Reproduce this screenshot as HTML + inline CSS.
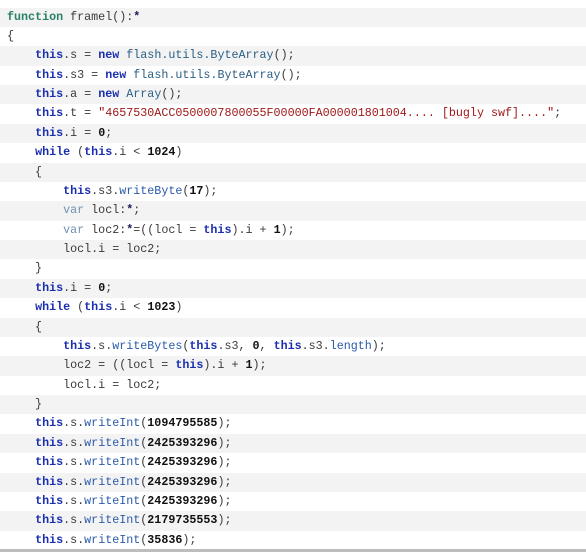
<!DOCTYPE html>
<html><head><meta charset="utf-8"><style>
html,body{margin:0;padding:0;background:#fff;width:586px;height:552px;overflow:hidden}
.wrap{position:absolute;top:7.5px;left:0;width:586px}
.r{height:19.38px;line-height:19.38px;white-space:pre;font-family:"Liberation Mono",monospace;font-size:11.7px;color:#3a3a3a;padding-left:7px;box-sizing:border-box}
.r:nth-child(odd){background:#f3f3f3}
.fn{color:#2a8068;font-weight:bold}
.k{color:#1a2fb0;font-weight:bold}
.v{color:#7090b0}
.c{color:#2a5f85}
.m{color:#2a5aa8}
.s{color:#a01818}
.n{color:#111;font-weight:bold}
.p{color:#1a1a60;font-weight:bold}
.bot{position:absolute;left:0;top:549px;width:586px;height:3px;background:#bdbdbd}
</style></head><body>
<div class="wrap">
<div class="r"><span class="fn">function</span> framel():<span class="p">*</span></div>
<div class="r">{</div>
<div class="r">    <span class="k">this</span>.s = <span class="k">new</span> <span class="c">flash.utils.ByteArray</span>();</div>
<div class="r">    <span class="k">this</span>.s3 = <span class="k">new</span> <span class="c">flash.utils.ByteArray</span>();</div>
<div class="r">    <span class="k">this</span>.a = <span class="k">new</span> <span class="c">Array</span>();</div>
<div class="r">    <span class="k">this</span>.t = <span class="s">"4657530ACC0500007800055F00000FA000001801004.... [bugly swf]...."</span>;</div>
<div class="r">    <span class="k">this</span>.i = <span class="n">0</span>;</div>
<div class="r">    <span class="k">while</span> (<span class="k">this</span>.i &lt; <span class="n">1024</span>)</div>
<div class="r">    {</div>
<div class="r">        <span class="k">this</span>.s3.<span class="m">writeByte</span>(<span class="n">17</span>);</div>
<div class="r">        <span class="v">var</span> locl:<span class="p">*</span>;</div>
<div class="r">        <span class="v">var</span> loc2:<span class="p">*</span>=((locl = <span class="k">this</span>).i + <span class="n">1</span>);</div>
<div class="r">        locl.i = loc2;</div>
<div class="r">    }</div>
<div class="r">    <span class="k">this</span>.i = <span class="n">0</span>;</div>
<div class="r">    <span class="k">while</span> (<span class="k">this</span>.i &lt; <span class="n">1023</span>)</div>
<div class="r">    {</div>
<div class="r">        <span class="k">this</span>.s.<span class="m">writeBytes</span>(<span class="k">this</span>.s3, <span class="n">0</span>, <span class="k">this</span>.s3.<span class="m">length</span>);</div>
<div class="r">        loc2 = ((locl = <span class="k">this</span>).i + <span class="n">1</span>);</div>
<div class="r">        locl.i = loc2;</div>
<div class="r">    }</div>
<div class="r">    <span class="k">this</span>.s.<span class="m">writeInt</span>(<span class="n">1094795585</span>);</div>
<div class="r">    <span class="k">this</span>.s.<span class="m">writeInt</span>(<span class="n">2425393296</span>);</div>
<div class="r">    <span class="k">this</span>.s.<span class="m">writeInt</span>(<span class="n">2425393296</span>);</div>
<div class="r">    <span class="k">this</span>.s.<span class="m">writeInt</span>(<span class="n">2425393296</span>);</div>
<div class="r">    <span class="k">this</span>.s.<span class="m">writeInt</span>(<span class="n">2425393296</span>);</div>
<div class="r">    <span class="k">this</span>.s.<span class="m">writeInt</span>(<span class="n">2179735553</span>);</div>
<div class="r">    <span class="k">this</span>.s.<span class="m">writeInt</span>(<span class="n">35836</span>);</div>
</div>
<div class="bot"></div>
</body></html>
